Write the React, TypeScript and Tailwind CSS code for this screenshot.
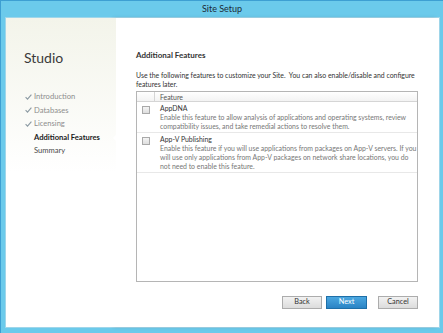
// Site Setup 마법사 - Additional Features 단계
const font = { fontFamily: 'Lato, "Open Sans", sans-serif' }

interface Step {
  label: string
  done?: boolean
  current?: boolean
}

const steps: Step[] = [
  { label: 'Introduction', done: true },
  { label: 'Databases', done: true },
  { label: 'Licensing', done: true },
  { label: 'Additional Features', current: true },
  { label: 'Summary' },
]

const features = [
  {
    name: 'AppDNA',
    desc: 'Enable this feature to allow analysis of applications and operating systems, review compatibility issues, and take remedial actions to resolve them.',
  },
  {
    name: 'App-V Publishing',
    desc: 'Enable this feature if you will use applications from packages on App-V servers. If you will use only applications from App-V packages on network share locations, you do not need to enable this feature.',
  },
]

function Check() {
  return (
    <svg width="7" height="6" viewBox="0 0 7 6" className="mr-[2px] shrink-0">
      <path d="M0.6 3.2 L2.5 5.2 L6.4 0.6" fill="none" stroke="#8c9aa3" strokeWidth="1.1" />
    </svg>
  )
}

function Checkbox() {
  return <div className="h-[8px] w-[8px] border border-[#a9a9a9] bg-gradient-to-b from-[#f4f4f4] to-[#dedede]" />
}

export default function App() {
  return (
    <div
      className="flex h-[333px] w-[443px] flex-col border-l border-t border-[#3d9fd2] bg-[#6bcaeb]"
      style={font}
    >
      {/* 타이틀 바 */}
      <div className="flex h-[16px] items-center justify-center text-[9px] text-[#1b2a36]">Site Setup</div>

      <div className="mb-[5px] ml-[4px] mr-[3px] flex flex-1 border border-[#9fd6ea] bg-white">
        {/* 좌측 단계 목록 */}
        <div className="relative w-[110px] bg-gradient-to-b from-[#f3f4ea] via-white to-white">
          <div className="pl-[18px] pt-[29px] text-[14px] text-[#3a3a3a]">Studio</div>
          <div className="mt-[22px] pl-[19px] text-[7.6px] leading-[13.5px]">
            {steps.map((s) => (
              <div key={s.label} className="flex items-center">
                {s.done ? <Check /> : <span className="w-[9px]" />}
                <span
                  className={
                    s.current
                      ? 'font-bold text-[#1a1a1a]'
                      : s.done
                        ? 'text-[#8e8e8e]'
                        : 'text-[#4a4a4a]'
                  }
                >
                  {s.label}
                </span>
              </div>
            ))}
          </div>
          {/* 현재 단계 표시 삼각형 */}
          <div className="absolute right-[-1px] top-[116px] h-0 w-0 border-y-[4px] border-r-[4px] border-y-transparent border-r-white" />
        </div>

        {/* 우측 본문 */}
        <div className="flex flex-1 flex-col bg-white pl-[20px] pr-[21px] shadow-[-3px_0_4px_rgba(0,0,0,0.12)]">
          <div className="pt-[31px] text-[8px] font-bold text-[#333]">Additional Features</div>
          <p className="mt-[10px] text-[6.9px] leading-[9px] text-[#333]">
            Use the following features to customize your Site.&nbsp; You can also enable/disable and configure features later.
          </p>

          {/* 기능 테이블 */}
          <div className="mt-[2px] h-[191px] border border-[#b5b5b5] text-[6.9px]">
            <div className="flex h-[10px] border-b border-[#d5d5d5] bg-gradient-to-b from-white to-[#f3f3f3] text-[#555]">
              <div className="w-[18px] border-r border-[#d5d5d5]" />
              <div className="pl-[5px] leading-[10px]">Feature</div>
            </div>
            {features.map((f) => (
              <div key={f.name} className="flex border-b border-[#e8e8e8] pb-[1px] pt-[2px]">
                <div className="flex w-[18px] justify-center pt-[2px]">
                  <Checkbox />
                </div>
                <div className="flex-1 pl-[5px] leading-[9px]">
                  <div className="text-[#333]">{f.name}</div>
                  <div className="text-[#777]">{f.desc}</div>
                </div>
              </div>
            ))}
          </div>

          {/* 하단 버튼 */}
          <div className="mt-[14px] flex justify-end text-[7.3px]">
            <button className="h-[13px] w-[40px] border border-[#acacac] bg-gradient-to-b from-[#f2f2f2] to-[#dcdcdc] text-[#333]">
              Back
            </button>
            <button className="ml-[4px] h-[13px] w-[41px] border border-[#1e6fa8] bg-gradient-to-b from-[#4aa7e0] to-[#2a84c5] text-white">
              Next
            </button>
            <button className="ml-[11px] h-[13px] w-[40px] border border-[#acacac] bg-gradient-to-b from-[#f2f2f2] to-[#dcdcdc] text-[#333]">
              Cancel
            </button>
          </div>
        </div>
      </div>
    </div>
  )
}
